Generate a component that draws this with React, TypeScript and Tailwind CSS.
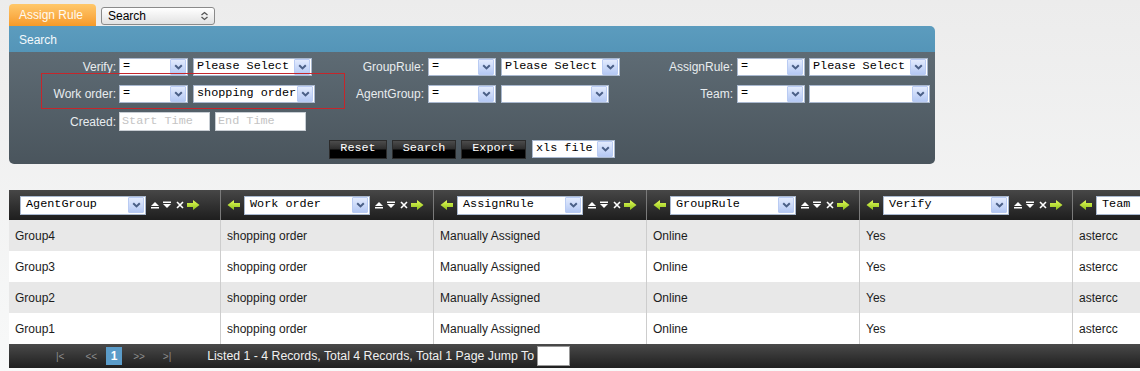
import React from "react";

const mono = "font-['Liberation_Mono','DejaVu_Sans_Mono',monospace]";

function XpArrow({ size = 16 }: { size?: number }) {
  return (
    <div
      className="shrink-0 flex items-center justify-center rounded-[1px] border border-[#b9cbf3] bg-linear-to-b from-[#e3ebfd] to-[#b5c9f4]"
      style={{ width: size, height: size }}
    >
      <svg width="9" height="6" viewBox="0 0 9 6">
        <path d="M1.2 1.2 L4.5 4.4 L7.8 1.2" stroke="#4a5f86" strokeWidth="2" fill="none" />
      </svg>
    </div>
  );
}

function Sel({ text, w, h = 18, textCls = "" }: { text: string; w: number; h?: number; textCls?: string }) {
  return (
    <div
      className="shrink-0 flex items-center justify-between bg-white border border-[#a9b8cf] pl-[3px] pr-px"
      style={{ width: w, height: h }}
    >
      <span className={`${mono} text-[11.8px] leading-none text-black whitespace-nowrap ${textCls}`}>{text}</span>
      <XpArrow />
    </div>
  );
}

function GreenArrow({ left }: { left?: boolean }) {
  return (
    <svg width="13" height="10" viewBox="0 0 13 10" className={left ? "-scale-x-100 shrink-0" : "shrink-0"}>
      <defs>
        <linearGradient id="ga" x1="0" y1="0" x2="0" y2="1">
          <stop offset="0" stopColor="#e4fb58" />
          <stop offset="1" stopColor="#8fc21c" />
        </linearGradient>
      </defs>
      <polygon points="0,3 6,3 6,0 12.5,5 6,10 6,7 0,7" fill="url(#ga)" />
    </svg>
  );
}

function SortIcons() {
  return (
    <div className="flex items-center">
      <svg width="8" height="8" viewBox="0 0 8 8" className="ml-[5px]">
        <polygon points="0,5 4,1 8,5" fill="white" />
        <rect x="0" y="6" width="8" height="1.5" fill="white" />
      </svg>
      <svg width="8" height="8" viewBox="0 0 8 8" className="ml-[4px]">
        <rect x="0" y="0.5" width="8" height="1.5" fill="white" />
        <polygon points="0,3 8,3 4,7" fill="white" />
      </svg>
      <svg width="8" height="8" viewBox="0 0 8 8" className="ml-[5px]">
        <path d="M1 1 L7 7 M7 1 L1 7" stroke="white" strokeWidth="1.6" />
      </svg>
      <span className="ml-[3px]">
        <GreenArrow />
      </span>
    </div>
  );
}

function Label({ text, w }: { text: string; w: number }) {
  return (
    <div className="shrink-0 text-right text-[#e8ecef] whitespace-nowrap" style={{ width: w }}>
      {text}
    </div>
  );
}

function Btn({ text, w }: { text: string; w: number }) {
  return (
    <div
      className={`h-[19px] flex items-center justify-center border border-[#2b2b2b] bg-[linear-gradient(#4c4c4c,#2c2c2c_48%,#000_52%,#000)] text-white ${mono} text-[11.8px]`}
      style={{ width: w }}
    >
      {text}
    </div>
  );
}

function TextInput({ ph }: { ph: string }) {
  return (
    <div className={`w-[91px] h-[19px] bg-white border border-[#c7cdd3] pl-[2px] flex items-center ${mono} text-[11.8px] text-[#c4c4c4]`}>
      {ph}
    </div>
  );
}

const cols = ["AgentGroup", "Work order", "AssignRule", "GroupRule", "Verify", "Team"];
const rows = ["Group4", "Group3", "Group2", "Group1"];

export default function App() {
  return (
    <div className="w-[1140px] h-[371px] overflow-hidden bg-linear-to-b from-[#ececec] to-[#f8f9f9] font-['Liberation_Sans',Arial,sans-serif] text-[12px]">
      {/* tab + search select */}
      <div className="flex items-start pl-[9px] pt-[4px]">
        <div className="w-[87px] h-[22px] rounded-t-[4px] bg-linear-to-b from-[#ffc86a] to-[#f69a27] text-[#fffaf0] pl-[10px] leading-[23px]">
          Assign Rule
        </div>
        <div className="ml-[5px] mt-[3px] w-[114px] h-[18px] rounded-[3px] border border-[#8a8a8a] bg-linear-to-b from-white to-[#e2e2e2] flex items-center justify-between pl-[6px] pr-[5px] text-black">
          <span>Search</span>
          <svg width="9" height="10" viewBox="0 0 9 10">
            <path d="M1.5 4 L4.5 1.5 L7.5 4 M1.5 6 L4.5 8.5 L7.5 6" stroke="#555" strokeWidth="1.3" fill="none" />
          </svg>
        </div>
      </div>

      {/* search panel */}
      <div className="ml-[9px] w-[926px]">
        <div className="h-[26px] rounded-tr-[5px] bg-linear-to-b from-[#5c9cbe] to-[#5495b8] pl-[10px] leading-[28px] text-[#f3f9fc]">
          Search
        </div>
        <div className="relative rounded-b-[5px] bg-linear-to-b from-[#5e6b74] to-[#4a555d] pt-px pb-[2px]">
          {/* row 1 */}
          <div className="h-[27px] flex items-center">
            <div className="w-[306px] flex items-center">
              <Label text="Verify:" w={107} />
              <div className="ml-[3px]"><Sel text="=" w={69} /></div>
              <div className="ml-[5px]"><Sel text="Please Select" w={119} /></div>
            </div>
            <div className="w-[309px] flex items-center">
              <Label text="GroupRule:" w={109} />
              <div className="ml-[4px]"><Sel text="=" w={68} /></div>
              <div className="ml-[5px]"><Sel text="Please Select" w={119} /></div>
            </div>
            <div className="flex items-center">
              <Label text="AssignRule:" w={109} />
              <div className="ml-[4px]"><Sel text="=" w={68} /></div>
              <div className="ml-[4px]"><Sel text="Please Select" w={119} /></div>
            </div>
          </div>
          {/* row 2 */}
          <div className="h-[27px] flex items-center">
            <div className="w-[306px] flex items-center">
              <Label text="Work order:" w={107} />
              <div className="ml-[3px]"><Sel text="=" w={69} /></div>
              <div className="ml-[5px]"><Sel text="shopping order" w={122} /></div>
            </div>
            <div className="w-[309px] flex items-center">
              <Label text="AgentGroup:" w={109} />
              <div className="ml-[4px]"><Sel text="=" w={68} /></div>
              <div className="ml-[5px]"><Sel text="" w={108} /></div>
            </div>
            <div className="flex items-center">
              <Label text="Team:" w={109} />
              <div className="ml-[4px]"><Sel text="=" w={68} /></div>
              <div className="ml-[4px]"><Sel text="" w={121} /></div>
            </div>
          </div>
          {/* row 3 */}
          <div className="h-[29px] flex items-center">
            <Label text="Created:" w={107} />
            <div className="ml-[3px]"><TextInput ph="Start Time" /></div>
            <div className="ml-[5px]"><TextInput ph="End Time" /></div>
          </div>
          {/* buttons */}
          <div className="h-[26px] flex items-center justify-center gap-[5px]">
            <Btn text="Reset" w={58} />
            <Btn text="Search" w={64} />
            <Btn text="Export" w={65} />
            <div className="ml-px"><Sel text="xls file" w={83} /></div>
          </div>

          {/* highlight box */}
          <div className="absolute left-[32px] top-[21px] w-[304px] h-[36px] border border-[#c5262b]" />
        </div>
      </div>

      {/* grid */}
      <div className="ml-[9px] mt-[26px] w-[1131px] overflow-hidden">
        <div className="w-[1290px]">
          <div className="h-[30px] flex bg-linear-to-b from-[#474747] to-[#1e1e1e]">
            {cols.map((c, i) => (
              <div
                key={c}
                className={`shrink-0 h-full flex items-center border-r border-[#7a7a7a] ${i === 0 ? "w-[212px] pl-[11px]" : "w-[213px] pl-[6px]"}`}
              >
                {i > 0 && (
                  <span className="mr-[4px]">
                    <GreenArrow left />
                  </span>
                )}
                <Sel text={c} w={126} h={19} textCls="pl-[2px]" />
                <SortIcons />
              </div>
            ))}
          </div>
          {rows.map((g, r) => (
            <div key={g} className={`h-[31px] flex text-[#1c1c1c] ${r % 2 === 0 ? "bg-[#e8e8e8]" : "bg-white"}`}>
              {[g, "shopping order", "Manually Assigned", "Online", "Yes", "astercc"].map((v, i) => (
                <div
                  key={i}
                  className={`shrink-0 h-full flex items-center border-r border-[#cdcdcd] pl-[6px] ${i === 0 ? "w-[212px]" : "w-[213px]"}`}
                >
                  {v}
                </div>
              ))}
            </div>
          ))}
          <div className="h-[24px] flex items-center bg-linear-to-b from-[#4a4a4a] to-[#202020] text-[10px] text-[#8c8c8c]">
            <span className="ml-[47px]">|&lt;</span>
            <span className="ml-[21px]">&lt;&lt;</span>
            <span className="ml-[9px] w-[16px] h-[18px] bg-[#5b9cc9] text-white text-[12px] font-bold flex items-center justify-center">1</span>
            <span className="ml-[11px]">&gt;&gt;</span>
            <span className="ml-[18px]">&gt;|</span>
            <span className="ml-[36px] text-[12.3px] text-[#f0f0f0] whitespace-nowrap">
              Listed 1 - 4 Records, Total 4 Records, Total 1 Page Jump To
            </span>
            <span className="ml-[3px] w-[33px] h-[20px] bg-white border border-[#999]" />
          </div>
        </div>
      </div>
    </div>
  );
}
